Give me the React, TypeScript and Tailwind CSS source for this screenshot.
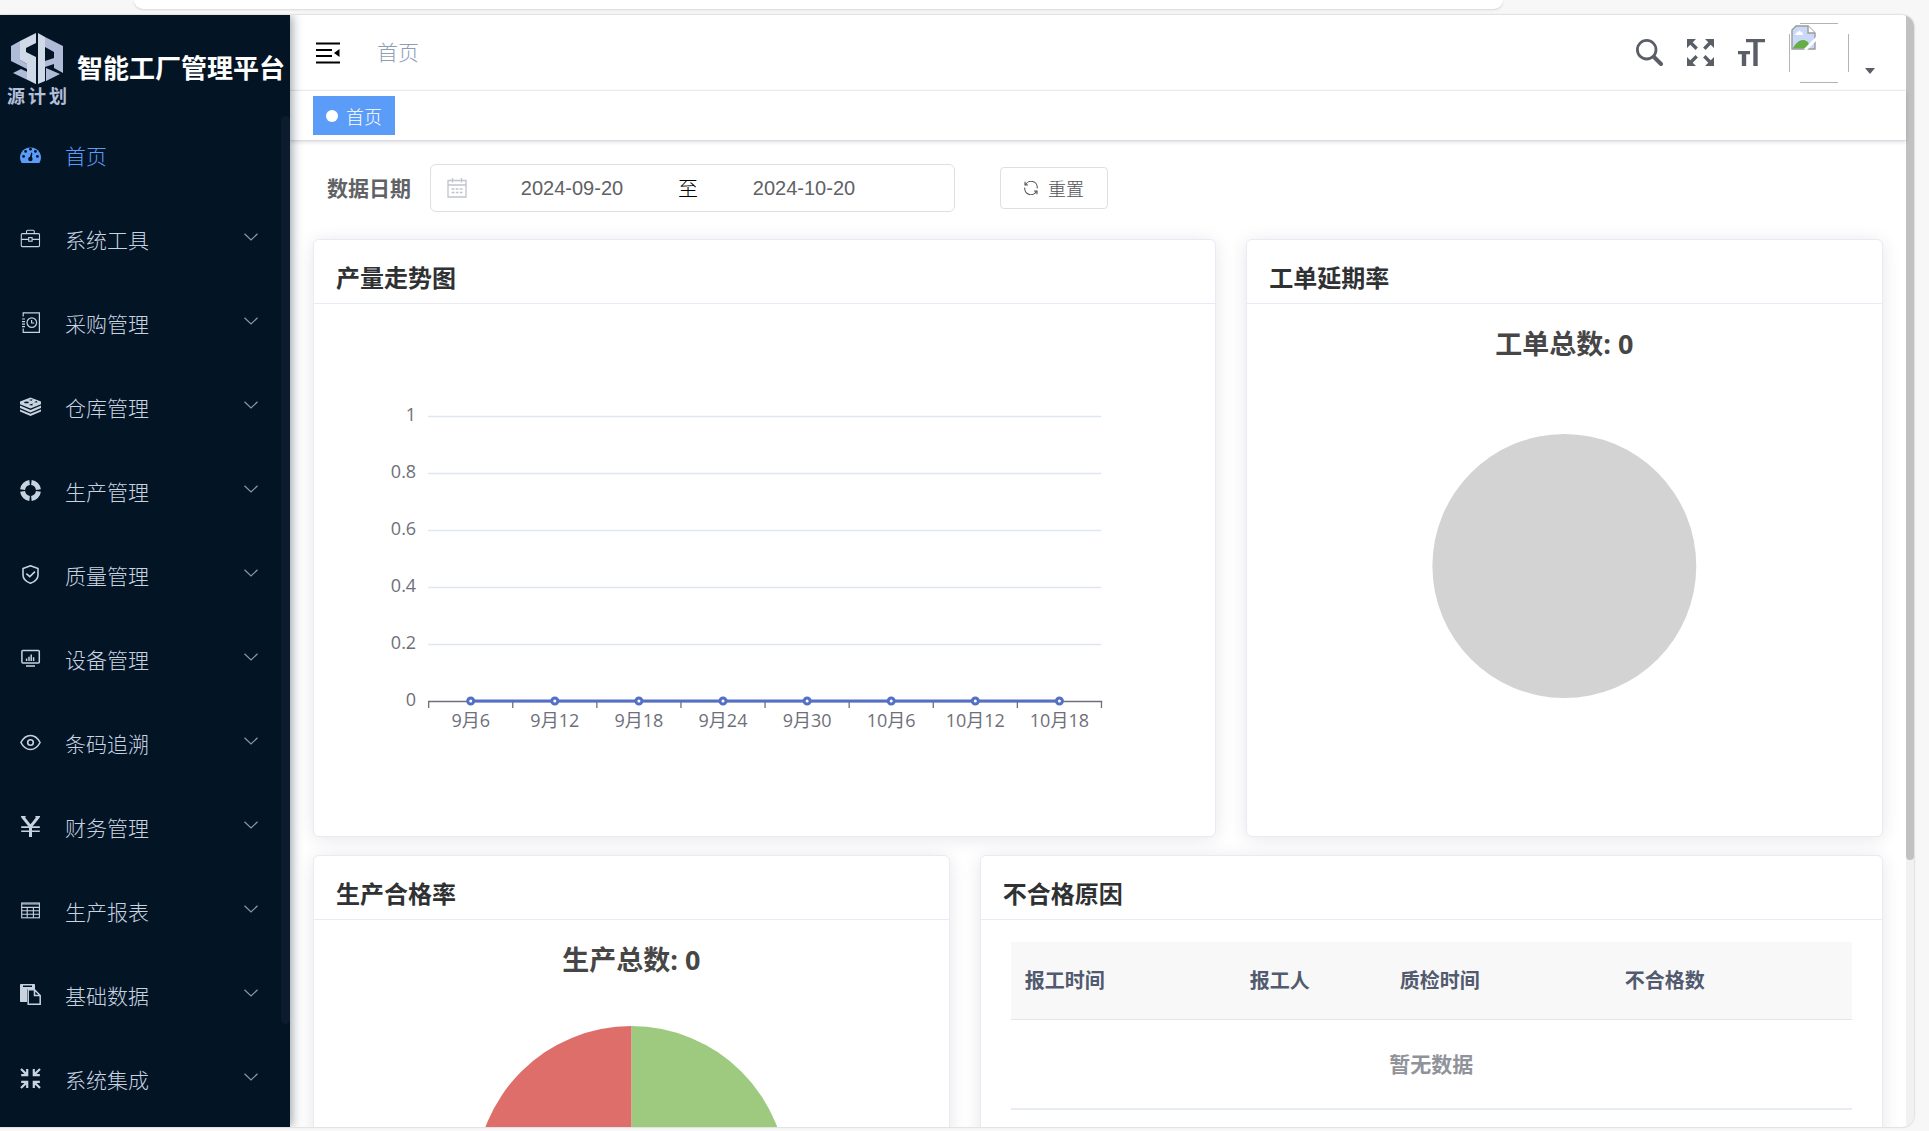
import { useState } from 'react';
import type { ReactNode } from 'react';

function Icon({ children, size = 21, className = '' }: { children: ReactNode; size?: number; className?: string }) {
  return (
    <svg width={size} height={size} viewBox="0 0 21 21" fill="none" stroke="currentColor" className={`shrink-0 ${className}`}>
      {children}
    </svg>
  );
}

const icons: Record<string, ReactNode> = {
  dashboard: (
    <g stroke="none">
      <path fill="currentColor" d="M1.4 18.4A10.5 10 0 1 1 19.6 18.4Q19.2 19 18.4 19H2.6Q1.8 19 1.4 18.4Z" />
      <g fill="#031425">
        <circle cx="3.6" cy="12.4" r="1.4" />
        <circle cx="5.6" cy="7.4" r="1.4" />
        <circle cx="10.5" cy="5.2" r="1.4" />
        <circle cx="15.4" cy="7.4" r="1.4" />
        <circle cx="17.4" cy="12.4" r="1.4" />
        <circle cx="10.4" cy="15" r="2.2" />
        <path d="M9.6 14.5L11.2 8.6L12.4 8.9L11.6 15.2Z" />
      </g>
    </g>
  ),
  tool: (
    <g strokeWidth="1.1">
      <rect x="1.3" y="5.6" width="18.2" height="13" rx="1" />
      <path d="M6.5 5.5V3.5Q6.5 2.2 7.8 2.2H13Q14.3 2.2 14.3 3.5V5.5M1.5 11.4H8.6M12.2 11.4H19.4" />
      <rect x="8.7" y="9.6" width="3.4" height="3.6" />
    </g>
  ),
  purchase: (
    <g strokeWidth="1.2">
      <path d="M3.2 4.5V.8H19.4V20.3H3.2V16.5M2 7H5M2 9.6H5M2 12.2H5M2 14.6H5" />
      <circle cx="11.8" cy="10.6" r="4.8" />
      <path d="M11.6 8V11H14.2" />
    </g>
  ),
  warehouse: (
    <g stroke="none">
      <path
        fill="currentColor"
        d="M10.5 1.5L21 5.6V8.2L10.5 12.6L0 8.2V5.6ZM0 9.6L10.5 14L21 9.6V12L10.5 16.4L0 12ZM0 13.4L10.5 17.8L21 13.4V15.6L10.5 20L0 15.6Z"
      />
      <g fill="#031425">
        <ellipse cx="6.5" cy="6.4" rx="2.4" ry="0.9" />
        <path d="M8.5 3.9L12.4 3.3L12 4.7ZM8.8 9L12.6 7.6L12.4 9.4ZM14 6.2L16.6 5L17.6 6.6Z" />
      </g>
    </g>
  ),
  produce: (
    <g strokeWidth="5">
      <path d="M11.4 2.6A8 8 0 0 1 18.4 9.6M18.4 11.4A8 8 0 0 1 11.4 18.4M9.6 18.4A8 8 0 0 1 2.6 11.4M2.6 9.6A8 8 0 0 1 9.6 2.6" />
    </g>
  ),
  quality: (
    <g strokeWidth="1.6">
      <path d="M10.5 1.7L18 4.4V11Q18 16.6 10.5 19.3Q3 16.6 3 11V4.4Z" strokeLinejoin="round" />
      <path d="M6.3 9.6L9.8 12.6L15 7.6" />
    </g>
  ),
  device: (
    <g strokeWidth="1.5">
      <rect x="1.9" y="2.5" width="17.4" height="12.4" rx="1" />
      <path d="M6.6 13V10.5M9 13V8.8M11.2 13V6.6M13.6 13V9.2M6 18.1H15" />
    </g>
  ),
  eye: (
    <g strokeWidth="1.6">
      <path d="M.9 10.5Q4.6 3.5 10.5 3.5T20.1 10.5Q16.4 17.5 10.5 17.5T.9 10.5Z" />
      <circle cx="10.5" cy="10.5" r="2.8" />
    </g>
  ),
  money: (
    <g>
      <path strokeWidth="3" d="M2.6 .8L10.5 10.6L18.4 .8M10.5 10V21" />
      <path strokeWidth="1.6" d="M1 .8H5.6M15.4 .8H20M1.2 11.1H19.8M1.2 15.2H19.8" />
    </g>
  ),
  report: (
    <g strokeWidth="1.1">
      <rect x="1.7" y="3" width="17.7" height="14.8" />
      <path d="M1.7 4H19.4M1.7 7.4H19.4M1.7 10.8H19.4M1.7 14.2H19.4M7.2 7.4V17.8M13.4 7.4V17.8" />
    </g>
  ),
  document: (
    <g>
      <path stroke="none" fill="currentColor" d="M0 .8Q0 0 .8 0H14.2Q15 0 15 .8V5H8Q7 5 7 6V18H.8Q0 18 0 17.2ZM3 1.6V3H12V1.6Z" />
      <path strokeWidth="1.5" d="M8.2 5.8H14.5L20.2 11.5V20.2H8.2ZM14.5 6V11.5H20" />
    </g>
  ),
  integrate: (
    <g strokeWidth="2.2">
      <path d="M1 1L6.5 6.4M7.2 1V7.2H1.2M20 1L14.5 6.4M13.8 1V7.2H19.8M1 20L6.5 14.6M7.2 20V13.8H1.2M20 20L14.5 14.6M13.8 20V13.8H19.8" />
    </g>
  ),
};

const menus = [
  { name: '首页', icon: 'dashboard', leaf: true },
  { name: '系统工具', icon: 'tool' },
  { name: '采购管理', icon: 'purchase' },
  { name: '仓库管理', icon: 'warehouse' },
  { name: '生产管理', icon: 'produce' },
  { name: '质量管理', icon: 'quality' },
  { name: '设备管理', icon: 'device' },
  { name: '条码追溯', icon: 'eye' },
  { name: '财务管理', icon: 'money' },
  { name: '生产报表', icon: 'report' },
  { name: '基础数据', icon: 'document' },
  { name: '系统集成', icon: 'integrate' },
];

const days = ['9月6', '9月12', '9月18', '9月24', '9月30', '10月6', '10月12', '10月18'];
const yLabels = ['1', '0.8', '0.6', '0.4', '0.2', '0'];

function Logo() {
  return (
    <div className="w-[60px] shrink-0 text-[#b4bfd8]">
      <svg viewBox="0 0 60 52" className="block h-[52px] w-[60px]">
        <path fill="#b0bbd7" d="M4 13L13 8V27L20 31V36L4 28Z" />
        <path fill="#b0bbd7" d="M6 40L14 36L29 43V51Z" />
        <path fill="#cfd9e8" d="M13 8L29 0V10L19 15V19L29 24V51L20 46V31L13 27Z" />
        <path fill="#b0bbd7" d="M38 4L56 13V40L47 35V31L38 34V28L47 25V19L38 14Z" />
        <path fill="#b0bbd7" d="M39 35L53 41L39 48Z" />
        <path fill="#cfd9e8" d="M31 0L38 4V48L31 51Z" />
      </svg>
      <div className="flex justify-between text-lg leading-5 font-bold">
        <span>源</span>
        <span>计</span>
        <span>划</span>
      </div>
    </div>
  );
}

function Sidebar() {
  return (
    <aside className="relative z-10 flex w-[290px] shrink-0 flex-col bg-[#031425] shadow-[2px_0_10px_rgba(0,21,41,0.4)]">
      <a href="#" className="flex h-[99px] shrink-0 items-center gap-2.5 pt-2 pl-[7px]">
        <Logo />
        <h1 className="pb-1 text-[26px] leading-8 font-bold whitespace-nowrap text-white">智能工厂管理平台</h1>
      </a>
      <nav className="min-h-0 flex-1 overflow-hidden">
        <ul>
          {menus.map((item) => (
            <li key={item.name}>
              <a
                href="#"
                className={`flex h-[84px] items-center pr-8 pl-5 text-[21px] font-light ${item.leaf ? 'text-[#5b9cf8]' : 'text-[#c8d3e0]'}`}
              >
                <Icon className="mb-1">{icons[item.icon]}</Icon>
                <span className="ml-6 flex-1">{item.name}</span>
                {!item.leaf && (
                  <svg width="14" height="8" viewBox="0 0 14 8" fill="none" stroke="#8d98a5" strokeWidth="1.2" className="mb-1.5">
                    <path d="M.5 .8L7 7L13.5 .8" />
                  </svg>
                )}
              </a>
            </li>
          ))}
        </ul>
      </nav>
      <div className="absolute top-[101px] right-0 bottom-[103px] w-[9px] rounded-full bg-[#0d1b2e]" />
    </aside>
  );
}

function BrokenAvatar() {
  return (
    <svg width="60" height="60" viewBox="0 0 60 60" fill="none">
      <path stroke="#b4b4b4" d="M11 .5H49M11 59.5H49M.5 11V49M59.5 11V49" />
      <path fill="#c9d9f7" stroke="#9a9a9a" strokeWidth="1.4" d="M7 3H19L26 10V26H3V7Z" />
      <path fill="#fff" d="M6 12Q7 9 9 9Q10 6 12 9Q14 9 14 12Z" />
      <path fill="#66ad45" d="M4 25Q9 16 15 17Q19 18 20 21L17 25.3H4Z" />
      <path fill="#fff" stroke="#9a9a9a" strokeWidth="1.4" d="M19 3V10H26" />
      <path stroke="#fff" strokeWidth="3" d="M16 27L28 15" />
    </svg>
  );
}

function Navbar() {
  return (
    <header className="flex h-[76px] shrink-0 items-center border-b border-[#f2f2f2] pr-[31px] pl-[26px]">
      <button aria-label="收起菜单">
        <svg width="24" height="22" viewBox="0 0 24 22">
          <path stroke="#000" strokeWidth="2" d="M0 1.5H24M0 8H16M0 14H16M0 20.5H24" />
          <path d="M18 11L23.5 7V15Z" />
        </svg>
      </button>
      <a href="#" className="ml-[37px] pb-0.5 text-[21px] font-light text-[#8c9eb6]">首页</a>
      <div className="ml-auto flex items-center text-[#5a5e66]">
        <button aria-label="搜索" className="mr-6">
          <svg width="27" height="27" viewBox="0 0 27 27" fill="none" stroke="currentColor">
            <circle cx="10.7" cy="10.7" r="9.3" strokeWidth="2.8" />
            <path strokeWidth="4" strokeLinecap="round" d="M18 18L25 25" />
          </svg>
        </button>
        <button aria-label="全屏" className="mr-6">
          <svg width="27" height="27" viewBox="0 0 27 27" fill="currentColor" stroke="currentColor">
            <path stroke="none" d="M0 0H9L0 9ZM27 0V9L18 0ZM0 27V18L9 27ZM27 27H18L27 18Z" />
            <path strokeWidth="3.4" d="M3.5 3.5L9.7 9.7M23.5 3.5L17.3 9.7M3.5 23.5L9.7 17.3M23.5 23.5L17.3 17.3" />
          </svg>
        </button>
        <button aria-label="布局大小" className="mr-6">
          <svg width="27" height="27" viewBox="0 0 27 27" fill="none" stroke="currentColor">
            <path strokeWidth="3.2" d="M8 1.6H27M0 13.6H12" />
            <path strokeWidth="4.4" d="M17.5 1V27M6 13V27" />
          </svg>
        </button>
        <button aria-label="用户菜单" className="flex items-end">
          <BrokenAvatar />
          <svg width="10" height="6" viewBox="0 0 10 6" fill="currentColor" className="mb-[9px] ml-4">
            <path d="M0 0H10L5 6Z" />
          </svg>
        </button>
      </div>
    </header>
  );
}

function Card({ title, className, children }: { title: string; className: string; children: ReactNode }) {
  return (
    <section className={`rounded-md border border-[#e6ebf5] bg-white shadow-[0_2px_18px_rgba(0,0,0,0.1)] ${className}`}>
      <div className="flex h-16 items-center border-b border-[#e6ebf5] px-[22px] pt-2.5">
        <h2 className="text-2xl leading-8 font-bold text-[#303133]">{title}</h2>
      </div>
      {children}
    </section>
  );
}

function TrendChart() {
  const left = 114.5;
  const step = 84.1;
  return (
    <svg viewBox="0 0 901 532" className="block h-[532px] w-full font-['Open_Sans','Noto_Sans_CJK_SC',sans-serif] text-lg">
      {yLabels.map((label, i) => (
        <g key={label}>
          {i < 5 && <line x1="114" x2="787" y1={112.5 + i * 57} y2={112.5 + i * 57} stroke="#e0e6f1" strokeWidth="1.5" />}
          <text x="102" y={117 + i * 57} textAnchor="end" fill="#6e7079">{label}</text>
        </g>
      ))}
      <path d="M114 397.5H788" stroke="#6e7079" strokeWidth="1.5" />
      {[...days, ''].map((day, i) => (
        <line key={day} x1={left + i * step} x2={left + i * step} y1="397" y2="404" stroke="#6e7079" strokeWidth="1.3" />
      ))}
      <path d={`M${left + step / 2} 397H${left + step * 7.5}`} stroke="#5470c6" strokeWidth="3" />
      {days.map((day, i) => (
        <g key={day}>
          <circle cx={left + (i + 0.5) * step} cy="397" r="3" fill="#fff" stroke="#5470c6" strokeWidth="3" />
          <text x={left + (i + 0.5) * step} y="423" textAnchor="middle" fill="#6e7079">{day}</text>
        </g>
      ))}
    </svg>
  );
}

function PieChart({ title, children }: { title: string; children: ReactNode }) {
  return (
    <svg viewBox="0 0 635 532" className="block h-[532px] w-full font-['Open_Sans','Noto_Sans_CJK_SC',sans-serif]">
      <text x="317.5" y="50" textAnchor="middle" fill="#464646" className="text-[27px] font-bold">{title}</text>
      {children}
    </svg>
  );
}

function ReasonTable() {
  return (
    <div className="pt-[22px] pr-[30px] pl-[30px]">
      <table className="w-full table-fixed border-b-2 border-[#e6ebf5] text-left text-xl">
        <thead className="bg-[#f8f8f9] text-[#515a6e]">
          <tr className="h-[77px] border-b border-[#dfe6ec]">
            <th className="w-[225px] pl-3.5 font-bold">报工时间</th>
            <th className="w-[150px] pl-3.5 font-bold">报工人</th>
            <th className="w-[225px] pl-3.5 font-bold">质检时间</th>
            <th className="pl-3.5 font-bold">不合格数</th>
          </tr>
        </thead>
        <tbody>
          <tr className="h-[90px]">
            <td colSpan={4} className="text-center text-[21px] font-bold text-[#909399]">暂无数据</td>
          </tr>
        </tbody>
      </table>
    </div>
  );
}

function FilterBar() {
  const [start, setStart] = useState('2024-09-20');
  const [end, setEnd] = useState('2024-10-20');

  const reset = () => {
    setStart('2024-09-20');
    setEnd('2024-10-20');
  };

  return (
    <form className="mb-[27px] flex items-center pl-3.5" onSubmit={(e) => e.preventDefault()}>
      <label htmlFor="start" className="mr-[19px] text-[21px] font-bold text-[#606266]">数据日期</label>
      <div className="flex h-12 w-[525px] items-center rounded-md border border-[#dcdfe6] pl-4 text-xl text-[#606266]">
        <svg width="20" height="20" viewBox="0 0 20 20" fill="none" stroke="#c0c4cc" strokeWidth="1.3">
          <path d="M1 2.5H19V19H1ZM1 7H19M5.5 0V4.5M14.5 0V4.5M4.5 11H7.5M8.8 11H11.5M12.8 11H15.5M4.5 14.5H7.5M8.8 14.5H11.5M12.8 14.5H15.5" />
        </svg>
        <input
          id="start"
          value={start}
          onChange={(e) => setStart(e.target.value)}
          className="ml-[5px] w-[200px] text-center font-['Liberation_Sans',sans-serif] outline-none"
        />
        <span className="w-8 text-center font-light text-black">至</span>
        <input
          aria-label="结束日期"
          value={end}
          onChange={(e) => setEnd(e.target.value)}
          className="w-[200px] text-center font-['Liberation_Sans',sans-serif] outline-none"
        />
      </div>
      <button
        type="button"
        onClick={reset}
        className="ml-[45px] flex h-[42px] w-[108px] items-center justify-center gap-2.5 rounded border border-[#dcdfe6] text-lg font-light text-[#505256]"
      >
        <svg width="14" height="14" viewBox="0 0 14 14" fill="none" stroke="currentColor" strokeWidth="1.1">
          <path d="M1 .8V4H4M1.4 4A6.2 6.2 0 0 1 13.2 7.4M13 13.2V10H10M12.6 10A6.2 6.2 0 0 1 .8 6.6" />
        </svg>
        重置
      </button>
    </form>
  );
}

export default function App() {
  return (
    <div className="flex h-screen flex-col overflow-hidden bg-[#f7f7f7] font-['Noto_Sans_CJK_SC',sans-serif]">
      {/* bottom edge of the address bar */}
      <div className="h-[15px] shrink-0 pr-[426px] pl-[134px]">
        <div className="h-[9px] rounded-b-[20px] bg-white shadow-sm" />
      </div>

      <div className="mr-[15px] mb-1 flex min-h-0 flex-1 overflow-hidden rounded-r-xl bg-white shadow-[0_0_2px_rgba(0,0,0,0.3)]">
        <Sidebar />
        <div className="flex min-w-0 flex-1 flex-col">
          <Navbar />
          <div className="relative flex h-[50px] shrink-0 items-center border-b border-[#d8dce5] pl-[23px] shadow-[0_1px_4px_rgba(0,0,0,0.15)]">
            <a href="#" className="flex h-[39px] w-[82px] items-center gap-2 bg-[#5b9cf8] pl-[13px] text-lg leading-6 font-light text-white">
              <span className="size-3 rounded-full bg-white" />
              首页
            </a>
          </div>

          <main className="min-h-0 flex-1 overflow-hidden px-[23px] pt-[23px]">
            <FilterBar />
            <div className="grid grid-cols-24 gap-x-[30px] gap-y-[18px]">
              <Card title="产量走势图" className="col-span-14">
                <TrendChart />
              </Card>
              <Card title="工单延期率" className="col-span-10">
                <PieChart title="工单总数: 0">
                  <circle cx="317.5" cy="262" r="132" fill="lightgray" />
                </PieChart>
              </Card>
              <Card title="生产合格率" className="col-span-10">
                <PieChart title="生产总数: 0">
                  <path d="M317.5 106A156 156 0 0 1 317.5 418Z" fill="#9eca7f" />
                  <path d="M317.5 106A156 156 0 0 0 317.5 418Z" fill="#de6e6a" />
                </PieChart>
              </Card>
              <Card title="不合格原因" className="col-span-14">
                <ReasonTable />
              </Card>
            </div>
          </main>
        </div>
        <div className="w-2 shrink-0 bg-[#f1f1f1]">
          <div className="h-[76%] rounded-b-full bg-[#c1c1c1]" />
        </div>
      </div>
    </div>
  );
}
